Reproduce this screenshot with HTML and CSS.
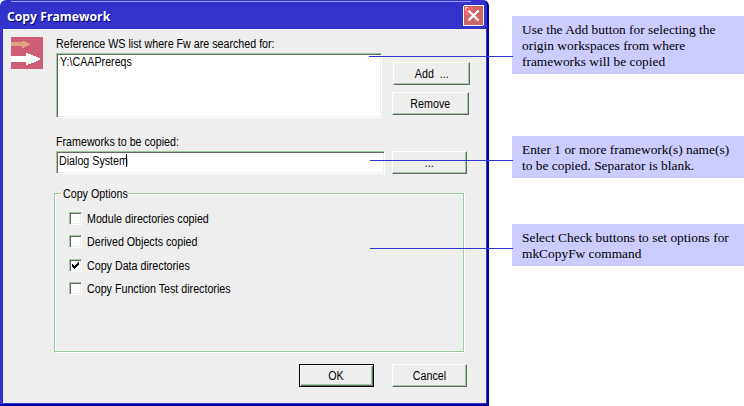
FILE: index.html
```html
<!DOCTYPE html>
<html lang="en">
<head>
<meta charset="utf-8">
<title>Copy Framework</title>
<link rel="stylesheet" href="styles.css">
</head>
<body>
<div class="page">
  <section class="window">
    <header class="titlebar">
      <h1 class="title">Copy Framework</h1>
      <svg class="close" viewBox="0 0 21 21" shape-rendering="crispEdges">
        <rect x="0" y="0" width="21" height="21" rx="2" fill="#fff"/>
        <rect x="1" y="1" width="19" height="19" fill="#cc6666"/>
        <path d="M2 2h8v3h-4v5h-4z" fill="#ff6666"/>
        <path d="M2 2h3v1h-2v2h-1z" fill="#ffcccc"/>
        <path d="M12 13h4v3h-4z" fill="#ff6666"/>
        <path d="M5.5 5.5l10 10M15.500 5.5l-10 10" stroke="#fff" stroke-width="2.300" shape-rendering="auto"/>
      </svg>
    </header>
    <div class="body">
      <svg class="logo" viewBox="0 0 32 32" shape-rendering="crispEdges">
        <defs>
          <pattern id="dots" width="4" height="4" patternUnits="userSpaceOnUse">
            <rect width="4" height="4" fill="#cc5a70"/>
            <path d="M0 0h1v1h-1zM2 2h1v1h-1z" fill="#cc6699"/>
            <path d="M2 0h1v1h-1zM0 2h1v1h-1z" fill="#d86666"/>
          </pattern>
        </defs>
        <rect width="32" height="32" fill="url(#dots)"/>
        <path d="M0 5h11V4h3v1h2v1h2v1h1v1h-2v1h-2v1h-2v1h-2v-2H0z" fill="#e2a283"/>
        <path d="M0 19h15v-3h2v1h3v1h2v1h3v1h2v1h2v2h-2v1h-2v1h-2v1h-3v1h-3v1h-2v-3H0z" fill="#fff"/>
      </svg>
      <div class="form">
        <div class="fields">
          <div class="field">
            <label class="t ref">Reference WS list where Fw are searched for:</label>
            <div class="sunken list"><span class="t path">Y:\CAAPrereqs</span></div>
          </div>
          <div class="side">
            <button class="btn add"><span class="t">Add&nbsp; ...</span></button>
            <button class="btn remove"><span class="t">Remove</span></button>
          </div>
        </div>
        <label class="t fw">Frameworks to be copied:</label>
        <div class="row">
          <div class="sunken input"><span class="t sys">Dialog System</span><i class="caret"></i></div>
          <button class="btn browse"><span class="t">...</span></button>
        </div>
        <div class="group">
          <div class="legend"><span class="t">Copy Options</span></div>
          <div class="check"><i class="box"></i><span class="t">Module directories copied</span></div>
          <div class="check"><i class="box"></i><span class="t">Derived Objects copied</span></div>
          <div class="check third"><i class="box"><svg class="tick" viewBox="0 0 7 7" shape-rendering="crispEdges"><path d="M0 2h1v1h1v1h1v-1h1v-1h1v-1h1v-1h1v3h-1v1h-1v1h-1v1h-1v1h-1v-1h-1v-1h-1z"/></svg></i><span class="t">Copy Data directories</span></div>
          <div class="check"><i class="box"></i><span class="t">Copy Function Test directories</span></div>
        </div>
        <div class="actions">
          <button class="btn ok"><span class="t">OK</span></button>
          <button class="btn cancel"><span class="t">Cancel</span></button>
        </div>
      </div>
    </div>
  </section>
  <aside class="notes">
    <p class="note n1">Use the Add button for selecting the<br>origin workspaces from where<br>frameworks will be copied</p>
    <p class="note n2">Enter 1 or more framework(s) name(s)<br>to be copied. Separator is blank.</p>
    <p class="note n3">Select Check buttons to set options for<br>mkCopyFw command</p>
  </aside>
</div>
</body>
</html>
```
FILE: styles.css
```css
* { box-sizing: border-box; }
body { margin: 0; background: #fff; font-family: "Liberation Sans", Arial, sans-serif; color: #000; }
.page { display: flex; width: 744px; height: 406px; overflow: hidden; }
.window { width: 489px; height: 406px; background: #33c; border-right: 2px solid #009; border-bottom: 2px solid #009; border-radius: 6px 6px 0 0; padding: 0 1px 1px 3px; flex: none; }
.titlebar { height: 29px; display: flex; justify-content: space-between; background: linear-gradient(#99f, #99f) 8px 1px / 460px 1px no-repeat; padding: 5px 2px 0 4px; }
.title { margin: 2px 0 0; font: bold 13px/18px "Open Sans", "Noto Sans", sans-serif; color: #fff; text-shadow: 1px 1px #006; white-space: nowrap; transform: scaleX(.94); transform-origin: 0 0; }
.close { width: 21px; height: 21px; }
.body { height: 374px; background: #eee; display: flex; padding: 8px 0 0 8px; }
.logo { width: 32px; height: 32px; flex: none; }
.form { margin-left: 11px; width: 416px; }
.t { font-size: 12.5px; line-height: 14px; white-space: nowrap; display: block; transform: scaleX(.855); transform-origin: 0 0; }
.btn .t { transform-origin: 50% 0; }
.fields { display: flex; height: 81px; padding-left: 2px; }
.field { width: 326px; }
.sunken { border: 1px solid; border-color: #99cc99 #fff #fff #99cc99; box-shadow: inset 1px 1px #666, inset -1px -1px #eee; background: #fff; }
.list { height: 65px; padding: 1px 3px; margin-top: 2px; }
.side { padding: 25px 0 0 10px; }
.btn { display: flex; align-items: center; justify-content: center; width: 75px; height: 23px; padding: 0; background: #eee; border: 1px solid; border-color: #fff #666 #666 #fff; box-shadow: inset -1px -1px #99cc99; border-radius: 0; font-family: inherit; color: #000; }
.add, .remove { width: 77px; }
.add { margin-left: 1px; }
.remove { margin-top: 7px; }
.fw { margin: 17px 0 0 2px; }
.row { display: flex; gap: 7px; padding-left: 2px; margin-top: 2px; }
.input { width: 329px; height: 23px; display: flex; padding: 2px; }
.sys { width: 67px; }
.caret { width: 1px; height: 13px; background: #000; }
.browse { padding-top: 1px; }
.group { margin-top: 19px; width: 410px; height: 159px; border: 1px solid #99cc99; box-shadow: inset 1px 1px #fff, 1px 1px #fff; padding-left: 14px; }
.legend { background: #eee; width: 67px; margin: -7px 0 0 -8px; padding-left: 2px; height: 16px; }
.check { display: flex; height: 13px; margin-bottom: 10px; gap: 5px; }
.legend + .check { margin-top: 9px; }
.check.third { margin-top: 11px; }
.box { width: 13px; height: 13px; background: #fff; border: 1px solid; border-color: #99cc99 #fff #fff #99cc99; box-shadow: inset 1px 1px #666, inset -1px -1px #eee; padding: 2px; }
.tick { display: block; width: 7px; height: 7px; }
.actions { display: flex; gap: 18px; margin: 12px 0 0 245px; }
.ok { border-color: #000; box-shadow: inset 1px 1px #fff, inset -1px -1px #666, inset -2px -2px #99cc99; }
.notes { width: 232px; margin-left: 23px; flex: none; }
.note { position: relative; margin: 0; background: #ccf; padding: 6px 0 0 10px; font: 13.4px/16px "Liberation Serif", "Times New Roman", serif; white-space: nowrap; }
.note::before { content: ""; position: absolute; height: 1px; background: #33c; width: 143px; right: 231px; }
.n1 { margin-top: 16px; height: 58px; }
.n1::before { top: 40px; width: 144px; }
.n2 { margin-top: 62px; height: 42px; }
.n2::before { top: 24px; }
.n3 { margin-top: 46px; height: 42px; }
.n3::before { top: 24px; }
```
